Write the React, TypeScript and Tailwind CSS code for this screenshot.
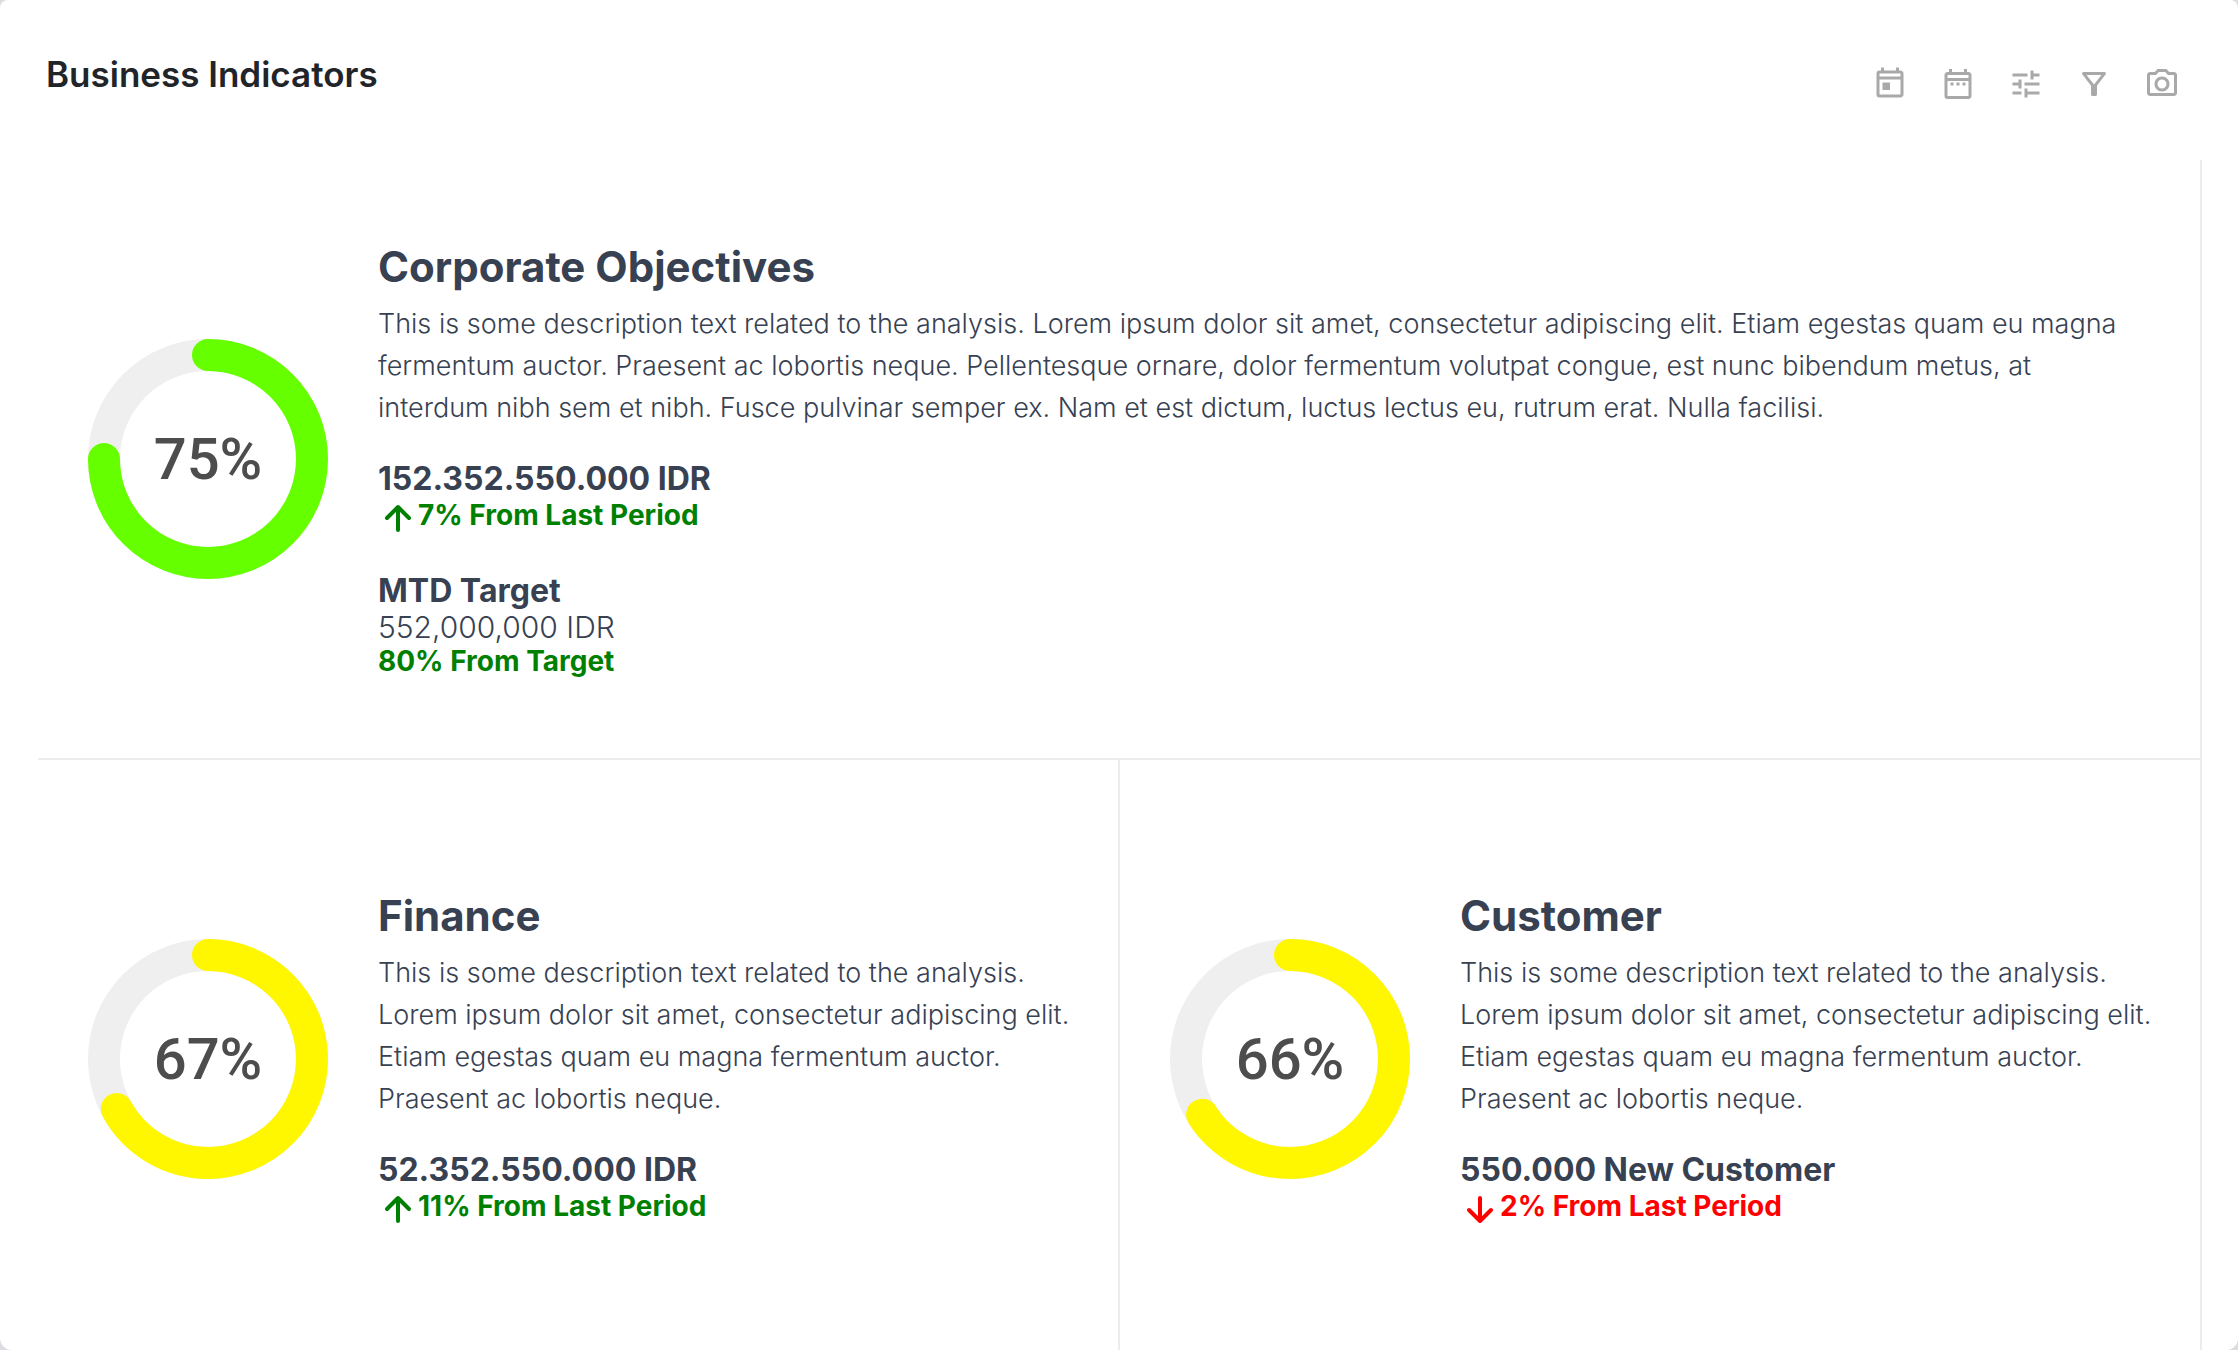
import type { ComponentType } from 'react';
import {
  MdOutlineCameraAlt,
  MdOutlineDateRange,
  MdOutlineFilterAlt,
  MdOutlineToday,
  MdTune,
} from 'react-icons/md';

type Trend = 'up' | 'down';

interface Indicator {
  title: string;
  percent: number;
  ring: string;
  description: string;
  value: string;
  trend: Trend;
  change: string;
  target?: { label: string; value: string; progress: string };
}

const corporate: Indicator = {
  title: 'Corporate Objectives',
  percent: 75,
  ring: 'stroke-[#66ff00]',
  description:
    'This is some description text related to the analysis. Lorem ipsum dolor sit amet, consectetur adipiscing elit. Etiam egestas quam eu magna fermentum auctor. Praesent ac lobortis neque. Pellentesque ornare, dolor fermentum volutpat congue, est nunc bibendum metus, at interdum nibh sem et nibh. Fusce pulvinar semper ex. Nam et est dictum, luctus lectus eu, rutrum erat. Nulla facilisi.',
  value: '152.352.550.000 IDR',
  trend: 'up',
  change: '7% From Last Period',
  target: { label: 'MTD Target', value: '552,000,000 IDR', progress: '80% From Target' },
};

const shortText =
  'This is some description text related to the analysis. Lorem ipsum dolor sit amet, consectetur adipiscing elit. Etiam egestas quam eu magna fermentum auctor. Praesent ac lobortis neque.';

const finance: Indicator = {
  title: 'Finance',
  percent: 67,
  ring: 'stroke-[#fff700]',
  description: shortText,
  value: '52.352.550.000 IDR',
  trend: 'up',
  change: '11% From Last Period',
};

const customer: Indicator = {
  title: 'Customer',
  percent: 66,
  ring: 'stroke-[#fff700]',
  description: shortText,
  value: '550.000 New Customer',
  trend: 'down',
  change: '2% From Last Period',
};

const tools: { label: string; Icon: ComponentType<{ className?: string }> }[] = [
  { label: 'Today', Icon: MdOutlineToday },
  { label: 'Date range', Icon: MdOutlineDateRange },
  { label: 'Adjust', Icon: MdTune },
  { label: 'Filter', Icon: MdOutlineFilterAlt },
  { label: 'Snapshot', Icon: MdOutlineCameraAlt },
];

function ProgressRing({ percent, ring }: { percent: number; ring: string }) {
  return (
    <div className="grid size-60 shrink-0 place-items-center">
      <svg viewBox="0 0 240 240" className="col-start-1 row-start-1 size-60" fill="none" aria-hidden="true">
        <circle cx="120" cy="120" r="104" strokeWidth="32" className="stroke-[#efefef]" />
        <circle
          cx="120"
          cy="120"
          r="104"
          strokeWidth="32"
          strokeLinecap="round"
          pathLength={100}
          strokeDasharray={`${percent} 100`}
          transform="rotate(-90 120 120)"
          className={ring}
        />
      </svg>
      <span className="col-start-1 row-start-1 font-['Roboto',sans-serif] text-[58px] leading-none font-medium text-[#4d4d4d]">
        {percent}%
      </span>
    </div>
  );
}

function TrendArrow({ trend }: { trend: Trend }) {
  return (
    <svg
      viewBox="0 0 40 40"
      className="size-10"
      fill="none"
      stroke="currentColor"
      strokeWidth="4"
      strokeLinecap="round"
      strokeLinejoin="round"
      aria-hidden="true"
    >
      {trend === 'up' ? <path d="M20 33V10M9 21l11-11 11 11" /> : <path d="M20 10v23M9 22l11 11 11-11" />}
    </svg>
  );
}

function IndicatorCard({ data }: { data: Indicator }) {
  const tone = data.trend === 'up' ? 'text-[#008000]' : 'text-[#ff0000]';
  return (
    <article className="flex h-full items-center gap-[50px] pr-10 pl-[50px] text-[#374151]">
      <ProgressRing percent={data.percent} ring={data.ring} />
      <div className="min-w-0 flex-1 pb-1">
        <h2 className="text-[42px] leading-[60px] font-bold">{data.title}</h2>
        <p className="mt-1.5 text-[27px] leading-[42px] font-light">{data.description}</p>
        <p className="mt-8 text-[32px] leading-9 font-bold">{data.value}</p>
        <p className={`flex items-start text-[28px] leading-9 font-bold ${tone}`}>
          <TrendArrow trend={data.trend} />
          {data.change}
        </p>
        {data.target && (
          <>
            <p className="mt-9 text-[32px] leading-9 font-bold">{data.target.label}</p>
            <p className="text-[30px] leading-9 font-light">{data.target.value}</p>
            <p className="text-[28px] leading-8 font-bold text-[#008000]">{data.target.progress}</p>
          </>
        )}
      </div>
    </article>
  );
}

export default function App() {
  return (
    <div className="min-h-screen bg-[#dcdde0] font-['Inter',sans-serif]">
      <main className="flex min-h-screen flex-col rounded-t-lg rounded-b-xl bg-white">
        <header className="flex h-40 items-start justify-between pr-[58px] pl-[46px]">
          <h1 className="pt-[50px] text-[35px] leading-[48px] font-semibold text-[#212429]">Business Indicators</h1>
          <nav aria-label="Tools" className="flex gap-8 pt-[66px] text-[#a9a9a9]">
            {tools.map(({ label, Icon }) => (
              <button key={label} type="button" aria-label={label} className="block">
                <Icon className="size-9" />
              </button>
            ))}
          </nav>
        </header>
        <div className="mr-9 ml-[38px] grid flex-1 grid-cols-2 grid-rows-[600px_1fr]">
          <section className="col-span-2 border-r-2 border-b-2 border-[#ececec] pr-5">
            <IndicatorCard data={corporate} />
          </section>
          <section className="border-r-2 border-[#ececec] pt-2">
            <IndicatorCard data={finance} />
          </section>
          <section className="border-r-2 border-[#ececec] pt-2">
            <IndicatorCard data={customer} />
          </section>
        </div>
      </main>
    </div>
  );
}
